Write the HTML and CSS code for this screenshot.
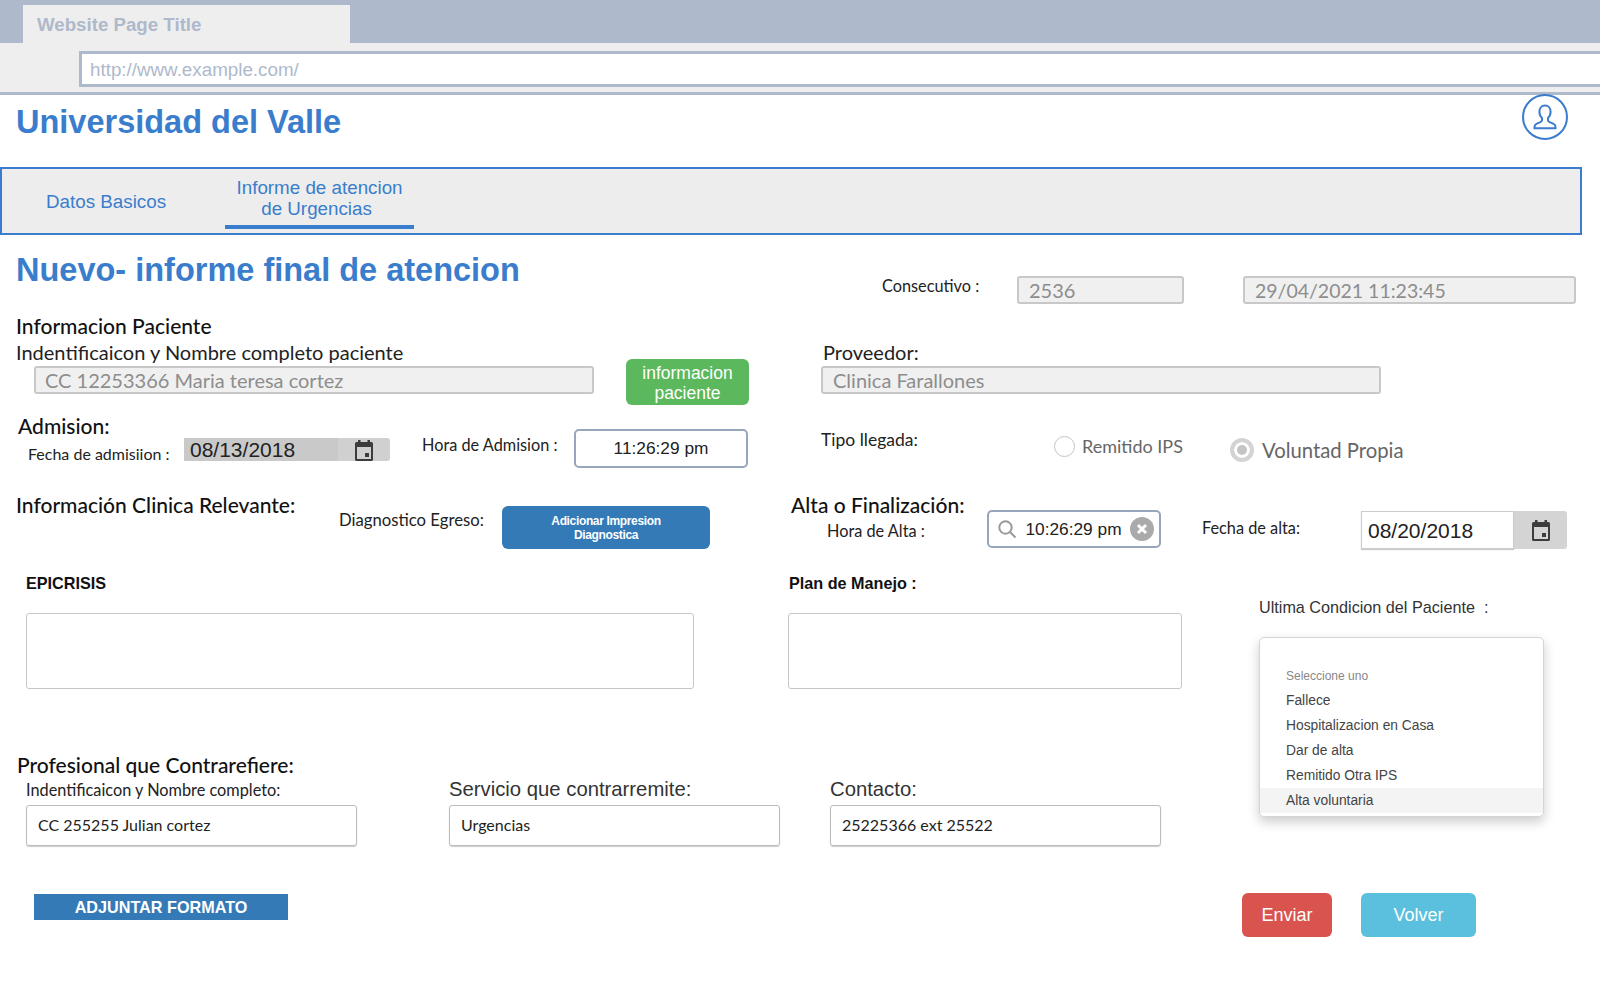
FILE: index.html
```html
<!DOCTYPE html>
<html lang="es">
<head>
	<meta charset="utf-8">
	<title>Universidad del Valle</title>
	<link rel="stylesheet" href="styles.css">
</head>
<body>

	<!-- browser frame -->
	<div class="tabbar">
		<div class="tab">Website Page Title</div>
	</div>
	<div class="urlbar">
		<div class="url">http://www.example.com/</div>
	</div>

	<header class="site-head">
		<h1 class="title">Universidad del Valle</h1>
		<svg class="user" viewBox="0 0 46 46" width="46" height="46">
			<circle cx="23" cy="23" r="22"/>
			<path d="M23 11.500c-3.600 0-5.600 2.800-5.600 6.200 0 2.600 1 4.800 2.600 6.200v2.300c0 1-.7 1.500-1.600 1.900l-3.600 1.500c-1.500.7-2.300 1.700-2.300 3.400v1.200h21v-1.200c0-1.700-.8-2.700-2.300-3.400l-3.600-1.500c-.9-.4-1.600-.9-1.600-1.900v-2.300c1.600-1.400 2.600-3.600 2.600-6.200 0-3.400-2-6.200-5.600-6.200z"/>
		</svg>
	</header>

	<nav class="nav">
		<a class="nav-item">Datos Basicos</a>
		<a class="nav-item active">Informe de atencion<br><span class="nudge">de Urgencias</span></a>
	</nav>

	<!-- heading and consecutive number -->
	<div class="row row-a">
		<h2 class="title form-title">Nuevo- informe final de atencion</h2>
		<label class="small lbl-consec">Consecutivo :</label>
		<div class="field readonly f-consec">2536</div>
		<div class="field readonly f-stamp">29/04/2021 11:23:45</div>
	</div>

	<!-- patient -->
	<div class="row row-b">
		<div class="col-patient">
			<div class="sect">Informacion Paciente</div>
			<div class="big">Indentificaicon y Nombre completo paciente</div>
			<div class="field readonly f-patient">CC 12253366 Maria teresa cortez</div>
		</div>
		<button class="btn btn-green">informacion<br>paciente</button>
		<div class="col-prov">
			<div class="big">Proveedor:</div>
			<div class="field readonly f-prov">Clinica Farallones</div>
		</div>
	</div>

	<!-- admission -->
	<div class="row row-c">
		<div class="col-adm">
			<div class="sect">Admision:</div>
			<div class="adm-line">
				<label class="small lbl-fecha">Fecha de admisiion :</label>
				<div class="date date-off">
					<span class="date-val">08/13/2018</span>
					<span class="date-btn">
						<svg viewBox="0 0 20 22" width="20" height="22"><path d="M4 1h2.500v2h7V1H16v2h1.500A1.500 1.500 0 0 1 19 4.500v16a1.500 1.500 0 0 1-1.500 1.500h-15A1.500 1.500 0 0 1 1 20.500v-16A1.500 1.500 0 0 1 2.500 3H4zM3 8v12h14V8zm8 6h4v4h-4z" fill-rule="evenodd"/></svg>
					</span>
				</div>
			</div>
		</div>
		<label class="small lbl-hora">Hora de Admision :</label>
		<div class="time t-adm">11:26:29 pm</div>
		<label class="small lbl-tipo">Tipo llegada:</label>
		<div class="radio r-one"><span class="dot"></span>Remitido IPS</div>
		<div class="radio r-two"><span class="dot on"></span>Voluntad Propia</div>
	</div>

	<!-- clinical information and discharge -->
	<div class="row row-d">
		<div class="sect sect-clin">Información Clinica Relevante:</div>
		<label class="small lbl-diag">Diagnostico Egreso:</label>
		<button class="btn btn-blue">Adicionar Impresion<br>Diagnostica</button>
		<div class="col-alta">
			<div class="sect">Alta o Finalización:</div>
			<label class="small lbl-alta">Hora de Alta :</label>
		</div>
		<div class="time t-alta">
			<svg class="search" viewBox="0 0 20 20" width="20" height="20"><circle cx="8.500" cy="8.500" r="6.200"/><path d="M13 13l5.500 5.500"/></svg>
			<span>10:26:29 pm</span>
			<svg class="clear" viewBox="0 0 24 24" width="24" height="24"><circle cx="12" cy="12" r="12"/><path d="M8 8l8 8M16 8l-8 8"/></svg>
		</div>
		<label class="small lbl-falta">Fecha de alta:</label>
		<div class="date date-on">
			<span class="date-val">08/20/2018</span>
			<span class="date-btn">
				<svg viewBox="0 0 20 22" width="20" height="22"><path d="M4 1h2.500v2h7V1H16v2h1.500A1.500 1.500 0 0 1 19 4.500v16a1.500 1.500 0 0 1-1.500 1.500h-15A1.500 1.500 0 0 1 1 20.500v-16A1.500 1.500 0 0 1 2.500 3H4zM3 8v12h14V8zm8 6h4v4h-4z" fill-rule="evenodd"/></svg>
			</span>
		</div>
	</div>

	<div class="lower">
		<div class="lower-main">
			<div class="notes">
				<div>
					<div class="note-lbl">EPICRISIS</div>
					<div class="area"></div>
				</div>
				<div>
					<div class="note-lbl note-plan">Plan de Manejo :</div>
					<div class="area"></div>
				</div>
			</div>

			<div class="sect sect-prof">Profesional que Contrarefiere:</div>
			<div class="prof">
				<div>
					<div class="small lbl-prof">Indentificaicon y Nombre completo:</div>
					<div class="field open">CC 255255 Julian cortez</div>
				</div>
				<div>
					<div class="lbl-arial">Servicio que contrarremite:</div>
					<div class="field open">Urgencias</div>
				</div>
				<div>
					<div class="lbl-arial">Contacto:</div>
					<div class="field open">25225366 ext 25522</div>
				</div>
			</div>
		</div>

		<aside class="cond">
			<div class="cond-lbl">Ultima Condicion del Paciente&nbsp; :</div>
			<ul class="list">
				<li class="hint">Seleccione uno</li>
				<li>Fallece</li>
				<li>Hospitalizacion en Casa</li>
				<li>Dar de alta</li>
				<li>Remitido Otra IPS</li>
				<li class="hover">Alta voluntaria</li>
			</ul>
		</aside>
	</div>

	<div class="row row-g">
		<button class="btn-attach">ADJUNTAR FORMATO</button>
		<button class="btn btn-red">Enviar</button>
		<button class="btn btn-cyan">Volver</button>
	</div>

</body>
</html>
```
FILE: styles.css
```css
body {
	margin: 0;
	width: 1600px;
	height: 1000px;
	overflow: hidden;
	background: #fff;
	color: #222;
	font-family: "Liberation Sans", Arial, sans-serif;
}

/* browser frame */
.tabbar {
	height: 43px;
	padding: 5px 0 0 23px;
	box-sizing: border-box;
	background: #aeb9cc;
}
.tab {
	width: 327px;
	height: 38px;
	padding-left: 14px;
	box-sizing: border-box;
	background: #eee;
	color: #aeb9cc;
	font-size: 18.700px;
	font-weight: bold;
	line-height: 39px;
}
.urlbar {
	height: 52px;
	padding: 8px 0 0 79px;
	box-sizing: border-box;
	background: #eee;
	border-bottom: 3px solid #aeb9cc;
}
.url {
	height: 36px;
	padding-left: 8px;
	box-sizing: border-box;
	background: #fff;
	border: 3px solid #aeb9cc;
	border-right: 0;
	color: #aeb9cc;
	font-size: 18.800px;
	line-height: 31px;
}

.site-head {
	display: flex;
	justify-content: space-between;
	height: 72px;
	padding: 0 32px 0 16px;
}
.title {
	margin: 0;
	color: #3a7dcc;
	font-size: 32.500px;
	font-weight: bold;
	line-height: 40px;
}
.site-head .title { margin-top: 7px; }
.user {
	margin-top: -1px;
	fill: none;
	stroke: #3a7dcc;
	stroke-width: 2;
}

.nav {
	display: flex;
	width: 1582px;
	height: 68px;
	box-sizing: border-box;
	background: #ededed;
	border: 2px solid #3a7dcc;
	color: #3a7dcc;
	font-size: 18.800px;
}
.nav-item {
	margin-left: 44px;
	line-height: 66px;
}
.nav-item.active {
	width: 189px;
	height: 60px;
	margin-left: 59px;
	padding-top: 8px;
	box-sizing: border-box;
	border-bottom: 4px solid #3a7dcc;
	text-align: center;
	line-height: 21px;
}
.nudge { margin-right: 6px; }

/* rows */
.row { display: flex; }
.row-a { height: 78px; }
.row-b { height: 102px; }
.row-c { height: 80px; }
.row-d { height: 78px; }
.row-g { margin-top: 47px; }

.sect {
	color: #111;
	font-family: Lato, sans-serif;
	font-size: 21px;
	font-weight: 500;
	line-height: 26px;
}
.big {
	font-family: Lato, sans-serif;
	font-size: 20px;
	line-height: 26px;
}
.small {
	font-family: Lato, sans-serif;
	font-size: 16.300px;
	line-height: 20px;
}

/* form controls */
.field {
	box-sizing: border-box;
	border-radius: 3px;
	font-family: Lato, sans-serif;
}
.readonly {
	height: 28px;
	padding-left: 10px;
	background: #f0f0f0;
	border: 2px solid #c8c8c8;
	color: #8d8d8d;
	font-size: 20px;
	line-height: 24px;
}
.open {
	height: 41px;
	padding-left: 11px;
	border: 1px solid #bbb;
	box-shadow: 0 1px 1px #ccc;
	font-size: 16px;
	line-height: 38px;
}

.form-title { margin: 15px 0 0 16px; width: 866px; }
.lbl-consec { width: 135px; margin-top: 41px; }
.f-consec { width: 167px; margin-top: 41px; }
.f-stamp { width: 333px; margin: 41px 0 0 59px; font-size: 19.500px; line-height: 26px; }

.col-patient { width: 610px; margin-left: 16px; }
.f-patient { width: 560px; margin: 1px 0 0 18px; padding-left: 9px; }
.col-prov { margin: 26px 0 0 72px; }
.col-prov .big { margin-left: 2px; }
.f-prov { width: 560px; margin-top: 1px; }

.btn {
	border: 0;
	border-radius: 6px;
	color: #fff;
	font-family: "Liberation Sans", Arial, sans-serif;
}
.btn-green {
	width: 123px;
	height: 46px;
	margin-top: 46px;
	padding: 2px 0 0;
	background: #5cb85c;
	font-size: 17.500px;
	line-height: 20px;
}

.col-adm { width: 404px; margin-left: 18px; }
.col-adm .sect { line-height: 22px; }
.adm-line { display: flex; align-items: flex-start; margin: 1px 0 0 10px; }
.lbl-fecha { width: 156px; margin-top: 6px; font-size: 16px; }
.date { display: flex; box-sizing: border-box; font-family: "Liberation Sans", Arial, sans-serif; }
.date-val { font-size: 21px; }
.date-btn { display: flex; align-items: center; justify-content: center; }
.date-btn svg { fill: #3c3c3c; }
.date-off { width: 206px; height: 23px; background: #d0d0d0; border-radius: 3px; }
.date-off .date-val {
	width: 154px;
	padding-left: 6px;
	box-sizing: border-box;
	background: #c9c9c9;
	line-height: 23px;
}
.date-off .date-btn { flex: 1; }
.date-on { width: 206px; height: 38px; margin: 16px 0 0 31px; }
.date-on .date-val {
	width: 153px;
	padding-left: 6px;
	box-sizing: border-box;
	border: 1px solid #ccc;
	line-height: 37px;
	box-shadow: 0 1px 1px #ccc;
}
.date-on .date-btn { flex: 1; background: #d4d4d4; border-radius: 0 3px 3px 0; }

.lbl-hora { width: 152px; margin-top: 20px; }
.time {
	display: flex;
	align-items: center;
	box-sizing: border-box;
	background: #fff;
	border: 2px solid #97a6bd;
	border-radius: 5px;
	font-size: 17.300px;
}
.t-adm { width: 174px; height: 39px; margin-top: 14px; justify-content: center; }
.lbl-tipo { width: 233px; margin: 15px 0 0 73px; font-size: 17.500px; }
.radio { display: flex; align-items: center; color: #666; font-family: Lato, sans-serif; }
.dot {
	box-sizing: border-box;
	border: 1px solid #c4c4c4;
	border-radius: 50%;
	background: #fff;
}
.r-one { height: 24px; margin-top: 19px; font-size: 18px; }
.r-one .dot { width: 21px; height: 21px; margin-right: 7px; }
.r-two { height: 26px; margin: 22px 0 0 47px; font-size: 20.300px; }
.r-two .dot { width: 24px; height: 24px; margin-right: 8px; }
.dot.on { border: 4px solid #d4d4d4; background: #c4c4c4; box-shadow: inset 0 0 0 3px #fff; }

.sect-clin { width: 323px; margin: -1px 0 0 16px; line-height: 22px; }
.lbl-diag { width: 163px; margin-top: 15px; font-size: 16.700px; }
.btn-blue {
	width: 208px;
	height: 43px;
	margin-top: 11px;
	padding: 0;
	background: #337ab7;
	font-size: 12px;
	font-weight: bold;
	letter-spacing: -0.350px;
	line-height: 14px;
}
.col-alta { width: 196px; margin: -1px 0 0 81px; }
.col-alta .sect { line-height: 22px; }
.lbl-alta { display: block; margin: 5px 0 0 36px; }
.t-alta { width: 174px; height: 38px; margin-top: 15px; padding: 0 5px 0 8px; justify-content: space-between; }
.search { fill: none; stroke: #999; stroke-width: 2; }
.clear circle { fill: #aaa; }
.clear path { stroke: #fff; stroke-width: 3; }
.lbl-falta { margin: 23px 0 0 41px; width: 128px; }

/* lower block */
.lower { display: flex; height: 273px; }
.lower-main { width: 1259px; }
.notes {
	display: grid;
	grid-template-columns: 668px 394px;
	column-gap: 94px;
	margin-left: 26px;
}
.note-lbl {
	margin-bottom: 20px;
	color: #111;
	font-size: 16.200px;
	font-weight: bold;
	line-height: 20px;
}
.note-plan { margin-left: 1px; }
.area {
	height: 76px;
	box-sizing: border-box;
	border: 1px solid #c6c6c6;
	border-radius: 3px;
}
.sect-prof { margin: 64px 0 0 17px; line-height: 24px; }
.prof {
	display: grid;
	grid-template-columns: 423px 381px 331px;
	margin: -1px 0 0 26px;
}
.prof .field { width: 331px; margin-top: 2px; }
.lbl-prof { line-height: 27px; }
.lbl-arial { color: #333; font-size: 20.300px; line-height: 27px; }

.cond { width: 285px; }
.cond-lbl { margin-top: 24px; color: #333; font-size: 16.200px; line-height: 20px; }
.list {
	height: 180px;
	margin: 20px 0 0;
	padding: 25px 0 0;
	box-sizing: border-box;
	list-style: none;
	border: 1px solid #d4d4d4;
	border-radius: 5px;
	box-shadow: 0 5px 12px rgba(0, 0, 0, 0.2);
	color: #444;
	font-family: "Liberation Sans", Arial, sans-serif;
	font-size: 13.800px;
}
.list li { height: 25px; padding-left: 26px; line-height: 25px; }
.list .hint { color: #888; font-size: 12px; line-height: 27px; }
.list .hover { background: #f4f4f4; }

.btn-attach {
	width: 254px;
	height: 26px;
	margin: 1px 0 0 34px;
	padding: 1px 0 0;
	border: 0;
	background: #337ab7;
	color: #fff;
	font-family: "Liberation Sans", Arial, sans-serif;
	font-size: 16.200px;
	font-weight: bold;
}
.btn-red {
	width: 90px;
	height: 44px;
	margin-left: 954px;
	background: #d9534f;
	font-size: 18px;
}
.btn-cyan {
	width: 115px;
	height: 44px;
	margin-left: 29px;
	background: #5bc0de;
	font-size: 18px;
}
```
